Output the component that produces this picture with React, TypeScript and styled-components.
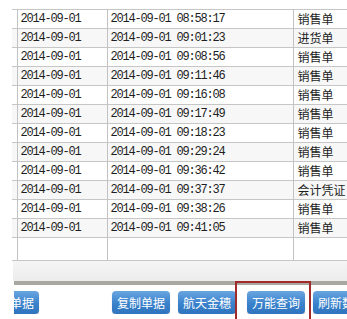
import React from 'react'
import styled, { createGlobalStyle } from 'styled-components'

const GlobalStyle = createGlobalStyle`
  html, body {
    margin: 0;
    padding: 0;
    background: #ffffff;
  }
`

const rows: [string, string][] = [
  ['08:58:17', '销售单'],
  ['09:01:23', '进货单'],
  ['09:08:56', '销售单'],
  ['09:11:46', '销售单'],
  ['09:16:08', '销售单'],
  ['09:17:49', '销售单'],
  ['09:18:23', '销售单'],
  ['09:29:24', '销售单'],
  ['09:36:42', '销售单'],
  ['09:37:37', '会计凭证'],
  ['09:38:26', '销售单'],
  ['09:41:05', '销售单'],
]

const S = {
  Page: styled.div`
    position: relative;
    width: 347px;
    height: 319px;
    overflow: hidden;
    background: #ffffff;
    display: flex;
    flex-direction: column;
  `,

  GridArea: styled.div`
    padding: 9px 0 0 12px;
  `,

  Table: styled.table`
    border-collapse: collapse;
    table-layout: fixed;
    width: 361px;
    color: #1e1e1e;
  `,

  Row: styled.tr<{ $shade?: boolean; $empty?: boolean }>`
    height: ${p => (p.$empty ? '23px' : '19px')};
    background: ${p => (p.$shade ? '#f7f7f7' : '#ffffff')};
    border-top: 1px solid #c6c6c6;
    border-bottom: 1px solid #c6c6c6;
  `,

  Stub: styled.td`
    box-sizing: border-box;
    width: 5px;
    padding: 0;
  `,

  Cell: styled.td<{ $w: number; $cjk?: boolean }>`
    box-sizing: border-box;
    width: ${p => p.$w}px;
    padding: 0 0 0 ${p => (p.$cjk ? 4 : 3)}px;
    border-left: 1px solid #c2c2c2;
    white-space: nowrap;
    overflow: hidden;
    font-family: ${p =>
      p.$cjk ? '"Noto Sans CJK SC", sans-serif' : '"Liberation Mono", monospace'};
    font-size: 12px;
    letter-spacing: ${p => (p.$cjk ? 0 : -1.2)}px;
    line-height: 18px;
    vertical-align: middle;
  `,

  Shelf: styled.div`
    height: 20px;
    margin-left: 13px;
    background: linear-gradient(to bottom, #f5f5f5, #ececec);
  `,

  Bar: styled.div`
    height: 4px;
    margin-left: 14px;
    background: #a9a8a0;
  `,

  Toolbar: styled.div`
    margin: 6px 0 0 14px;
    overflow: hidden;
  `,

  ButtonRow: styled.div`
    display: flex;
    align-items: center;
    margin-left: -33px;
  `,

  Button: styled.div<{ $gap: number }>`
    flex: none;
    margin-left: ${p => p.$gap}px;
    height: 23px;
    padding: 0 5px;
    display: flex;
    align-items: center;
    border-radius: 4px;
    background: linear-gradient(to bottom, #6aa6e0, #3a82cc 55%, #2f74bd);
    box-shadow: 0 1px 1px rgba(0, 0, 0, 0.25);
    color: #ffffff;
    font-family: "Noto Sans CJK SC", sans-serif;
    font-size: 12px;
    white-space: nowrap;
  `,

  Highlight: styled.div`
    position: absolute;
    left: 235px;
    top: 281px;
    width: 72px;
    height: 45px;
    border: 2px solid #a32a2a;
  `,
}

const buttons: [string, number][] = [
  ['保存单据', 0],
  ['复制单据', 73],
  ['航天金穗', 8],
  ['万能查询', 11],
  ['刷新数据', 8],
]

const App = () => (
  <S.Page>
    <GlobalStyle />
    <S.GridArea>
      <S.Table>
        <tbody>
          {rows.map(([time, kind], i) => (
            <S.Row key={i} $shade={i % 2 === 1}>
              <S.Stub />
              <S.Cell $w={90}>2014-09-01</S.Cell>
              <S.Cell $w={186}>2014-09-01 {time}</S.Cell>
              <S.Cell $w={80} $cjk>{kind}</S.Cell>
            </S.Row>
          ))}
          <S.Row $empty>
            <S.Stub />
            <S.Cell $w={90} />
            <S.Cell $w={186} />
            <S.Cell $w={80} $cjk />
          </S.Row>
        </tbody>
      </S.Table>
    </S.GridArea>
    <S.Shelf />
    <S.Bar />
    <S.Toolbar>
      <S.ButtonRow>
        {buttons.map(([label, gap]) => (
          <S.Button key={label} $gap={gap}>{label}</S.Button>
        ))}
      </S.ButtonRow>
    </S.Toolbar>
    <S.Highlight />
  </S.Page>
)

export default App
